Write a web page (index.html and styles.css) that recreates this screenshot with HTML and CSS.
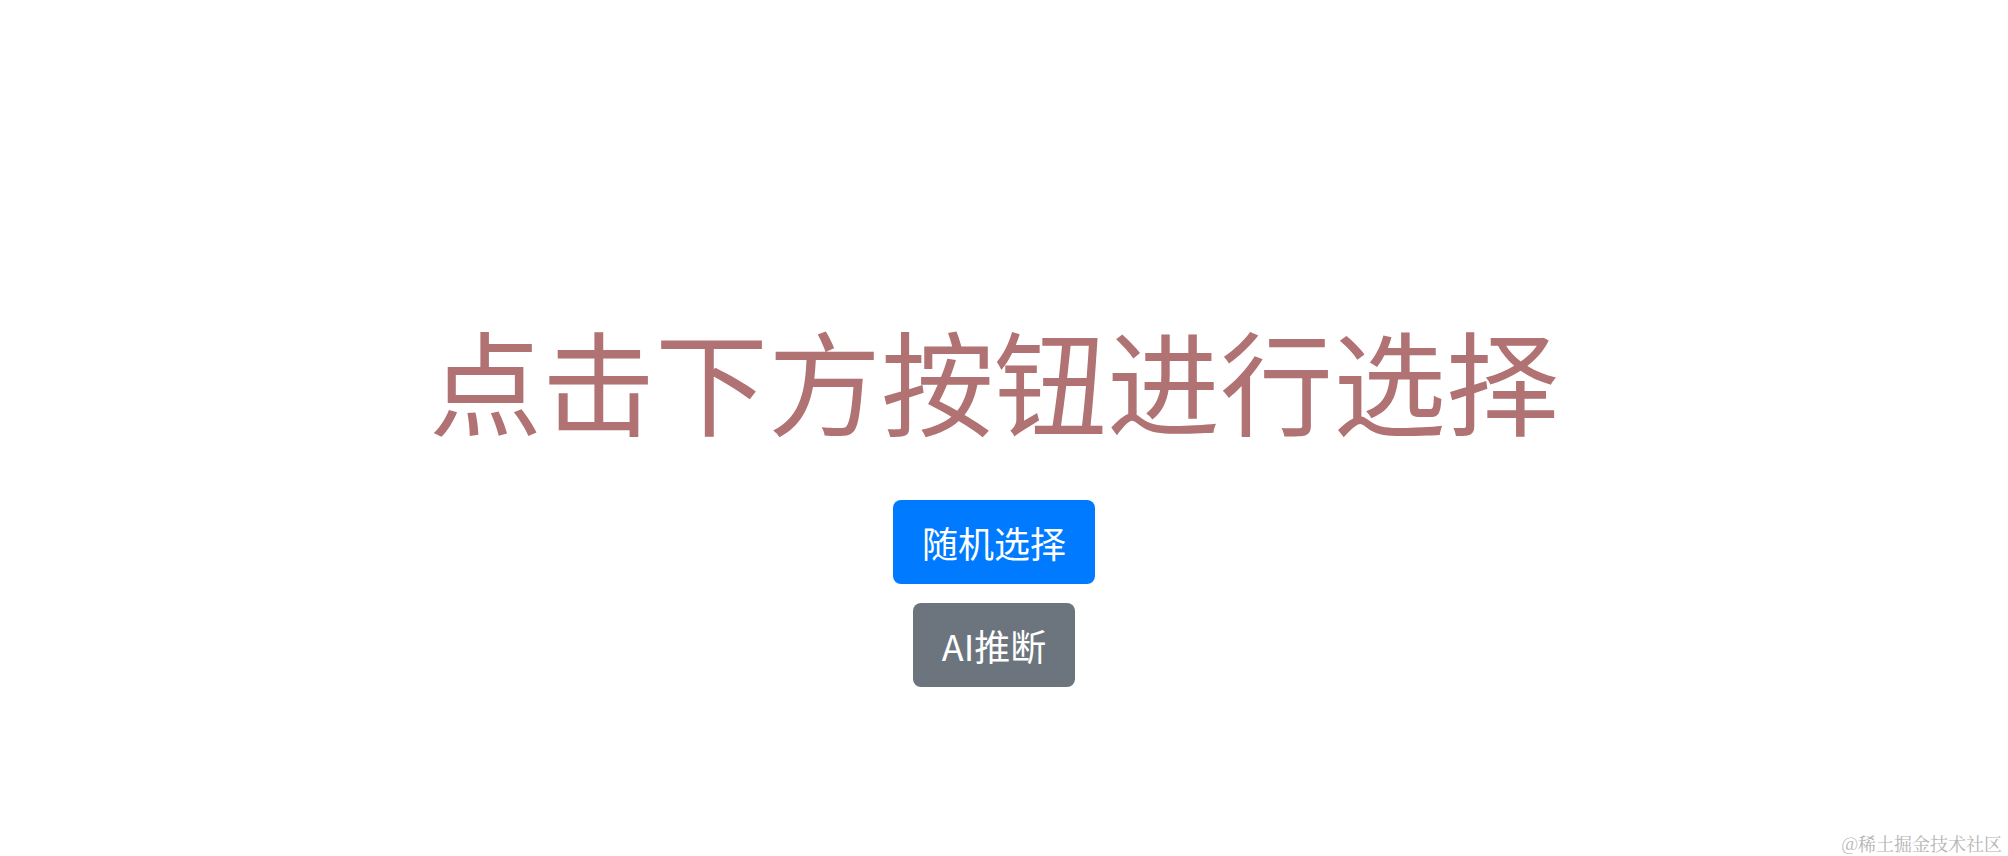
FILE: index.html
```html
<!DOCTYPE html>
<html lang="zh-CN">
<head>
<meta charset="utf-8">
<title>选择</title>
<link rel="stylesheet" href="styles.css">
</head>
<body>
<div class="page">
  <main class="content">
    <h1 class="title">点击下方按钮进行选择</h1>
    <div class="actions">
      <button class="btn btn-primary" type="button">随机选择</button>
      <button class="btn btn-secondary" type="button">AI推断</button>
    </div>
  </main>
  <div class="watermark">@稀土掘金技术社区</div>
</div>
</body>
</html>
```

FILE: styles.css
```css
html, body {
  margin: 0;
  padding: 0;
  background: #ffffff;
}

body {
  font-family: "Noto Sans CJK SC", "Noto Sans", sans-serif;
}

.page {
  position: relative;
  width: 2008px;
  height: 856px;
  box-sizing: border-box;
  padding-right: 20px;
  overflow: hidden;
}

.content {
  display: flex;
  flex-direction: column;
  align-items: center;
  padding-top: 311px;
}

.title {
  margin: 0;
  font-size: 113px;
  line-height: 134px;
  font-weight: 400;
  color: #b07272;
  white-space: nowrap;
}

.actions {
  display: flex;
  flex-direction: column;
  align-items: center;
  gap: 19px;
  margin-top: 55px;
}

.btn {
  border: 0;
  border-radius: 8px;
  padding: 15px 29px;
  font-family: "Noto Sans CJK SC", "Noto Sans", sans-serif;
  font-size: 36px;
  line-height: 54px;
  color: #ffffff;
  cursor: pointer;
}

.btn-primary {
  background: #007bff;
}

.btn-secondary {
  background: #6c757d;
}

.watermark {
  position: absolute;
  right: 6px;
  bottom: 2px;
  font-family: "Noto Serif CJK SC", "Noto Sans CJK SC", serif;
  font-size: 18px;
  line-height: 22px;
  color: #b4b4b4;
}
```
